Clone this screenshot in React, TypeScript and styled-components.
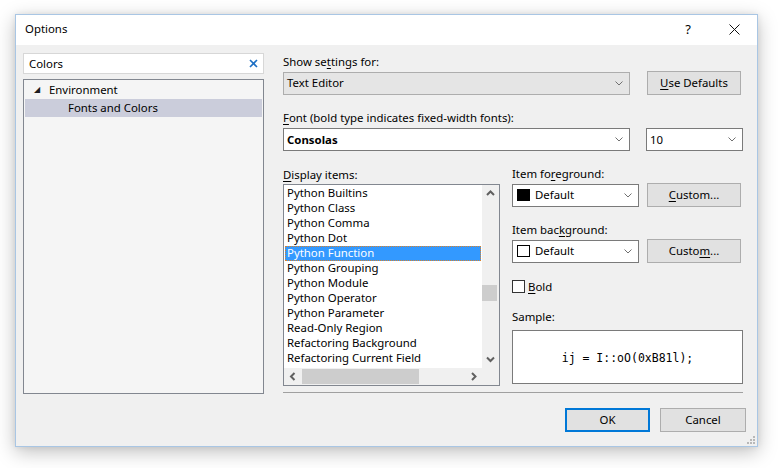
import React from "react";
import styled, { createGlobalStyle } from "styled-components";

const Global = createGlobalStyle`
  html, body { margin: 0; padding: 0; background: #ffffff; }
  body {
    font-family: "Noto Sans", "Open Sans", sans-serif;
    font-size: 11.4px;
    color: #000;
  }
  * { box-sizing: border-box; }
  u { text-decoration: underline; text-underline-offset: 2px; }
`;

const Stage = styled.div`
  width: 778px;
  height: 468px;
  padding: 14px 0 0 15px;
  background: #fff;
`;

const Win = styled.div`
  position: relative;
  width: 743px;
  height: 433px;
  border: 1px solid #a9c6e4;
  background: #f0f0f0;
  box-shadow: 0 5px 18px rgba(0, 0, 0, 0.25), 0 0 6px rgba(0, 0, 0, 0.08);
  display: flex;
  flex-direction: column;
`;

const TitleBar = styled.div`
  height: 30px;
  background: #fff;
  display: flex;
  align-items: center;
  padding-left: 9px;
  padding-bottom: 2px;
`;

const TitleText = styled.div`
  flex: 1;
  line-height: 16px;
`;

const TitleBtn = styled.div`
  width: 46px;
  height: 28px;
  display: flex;
  align-items: center;
  justify-content: center;
  font-size: 13px;
`;

const Body = styled.div`
  flex: 1;
  display: flex;
  gap: 19px;
  padding: 8px 11px 0 7px;
`;

const LeftPane = styled.div`
  width: 241px;
  display: flex;
  flex-direction: column;
`;

const SearchBox = styled.div`
  height: 21px;
  background: #fff;
  border: 1px solid #d7d7d7;
  display: flex;
  align-items: center;
  padding: 0 5px 0 5px;
`;

const SearchText = styled.div`
  flex: 1;
  line-height: 16px;
`;

const Tree = styled.div`
  margin-top: 5px;
  height: 315px;
  border: 1px solid #828790;
  background: #f5f5f5;
  padding: 1px;
`;

const TreeRow = styled.div<{ $indent: number; $selected?: boolean }>`
  height: 18px;
  display: flex;
  align-items: center;
  padding-left: ${(p) => p.$indent}px;
  padding-bottom: 2px;
  background: ${(p) => (p.$selected ? "#cbcddb" : "transparent")};
`;

const Expander = styled.span`
  width: 15px;
  font-size: 8px;
  color: #1e1e1e;
  line-height: 10px;
`;

const RightPane = styled.div`
  flex: 1;
  display: flex;
  flex-direction: column;
`;

const Label = styled.div<{ $mt: number }>`
  margin-top: ${(p) => p.$mt}px;
  height: 16px;
  line-height: 14px;
`;

const Row = styled.div<{ $mt?: number; $gap: number; $h: number }>`
  margin-top: ${(p) => p.$mt ?? 0}px;
  height: ${(p) => p.$h}px;
  display: flex;
  align-items: center;
  gap: ${(p) => p.$gap}px;
`;

const ComboBox = styled.div<{ $w: number; $h: number; $disabled?: boolean }>`
  width: ${(p) => p.$w}px;
  height: ${(p) => p.$h}px;
  background: ${(p) => (p.$disabled ? "#e5e5e5" : "#fff")};
  border: 1px solid ${(p) => (p.$disabled ? "#adadad" : "#7a7a7a")};
  display: flex;
  align-items: center;
  padding: 0 6px 0 3px;
  gap: 5px;
`;

const ComboText = styled.div<{ $bold?: boolean }>`
  flex: 1;
  line-height: 16px;
  font-weight: ${(p) => (p.$bold ? 700 : 400)};
  white-space: nowrap;
`;

const Swatch = styled.span<{ $color: string }>`
  width: 13px;
  height: 12px;
  margin-left: 1px;
  background: ${(p) => p.$color};
  border: 1px solid #000;
`;

const Button = styled.div<{ $w: number; $h: number; $default?: boolean }>`
  width: ${(p) => p.$w}px;
  height: ${(p) => p.$h}px;
  background: #e1e1e1;
  border: ${(p) => (p.$default ? "2px solid #0078d7" : "1px solid #adadad")};
  display: flex;
  align-items: center;
  justify-content: center;
  line-height: 16px;
`;

const DisplaySection = styled.div`
  margin-top: 16px;
  display: flex;
  gap: 12px;
`;

const ListCol = styled.div`
  width: 217px;
  display: flex;
  flex-direction: column;
`;

const SideCol = styled.div`
  width: 231px;
  display: flex;
  flex-direction: column;
`;

const ListBox = styled.div`
  height: 202px;
  border: 1px solid #828790;
  background: #fff;
  display: grid;
  grid-template-columns: 1fr 17px;
  grid-template-rows: 1fr 17px;
`;

const Items = styled.div`
  padding: 1px 1px 0 1px;
  overflow: hidden;
`;

const Item = styled.div<{ $selected?: boolean }>`
  height: 15px;
  line-height: 14px;
  padding-left: 2px;
  white-space: nowrap;
  outline: ${(p) => (p.$selected ? "1px dotted #d9822b" : "none")};
  outline-offset: -1px;
  background: ${(p) => (p.$selected ? "#3399ff" : "transparent")};
  color: ${(p) => (p.$selected ? "#fff" : "#000")};
`;

const VScroll = styled.div`
  background: #f0f0f0;
  display: flex;
  flex-direction: column;
`;

const HScroll = styled.div`
  background: #f0f0f0;
  display: flex;
`;

const Corner = styled.div`
  background: #f0f0f0;
`;

const ArrowBtn = styled.div`
  width: 17px;
  height: 17px;
  flex: none;
  display: flex;
  align-items: center;
  justify-content: center;
`;

const Track = styled.div<{ $vertical?: boolean }>`
  flex: 1;
  display: flex;
  flex-direction: ${(p) => (p.$vertical ? "column" : "row")};
`;

const Thumb = styled.div<{ $vertical?: boolean; $offset: number; $size: number }>`
  background: #cdcdcd;
  ${(p) =>
    p.$vertical
      ? `margin-top: ${p.$offset}px; height: ${p.$size}px; margin-left: 0; width: 15px;`
      : `margin-left: ${p.$offset}px; width: ${p.$size}px; height: 15px; margin-top: 1px;`}
`;

const CheckRow = styled.div`
  margin-top: 17px;
  height: 13px;
  display: flex;
  align-items: center;
  gap: 3px;
`;

const CheckBox = styled.span`
  width: 13px;
  height: 13px;
  border: 1px solid #333;
  background: #fff;
`;

const SampleBox = styled.div`
  margin-top: 4px;
  height: 54px;
  background: #fff;
  border: 1px solid #7a7a7a;
  display: flex;
  align-items: center;
  justify-content: center;
  font-family: "DejaVu Sans Mono", "Liberation Mono", monospace;
  font-size: 11.5px;
  white-space: pre;
  padding-top: 1px;
`;

const Separator = styled.div`
  margin-top: 6px;
  width: 460px;
  height: 1px;
  background: #a0a0a0;
`;

const ButtonRow = styled.div`
  margin-top: 15px;
  display: flex;
  justify-content: flex-end;
  gap: 10px;
`;

const Grip = styled.svg`
  position: absolute;
  right: 2px;
  bottom: 2px;
`;

const Chevron = () => (
  <svg width="8" height="5" viewBox="0 0 8 5">
    <polyline points="0.5,0.5 4,4 7.5,0.5" fill="none" stroke="#707070" strokeWidth="1" />
  </svg>
);

const ScrollArrow = ({ dir }: { dir: "up" | "down" | "left" | "right" }) => {
  const pts = {
    up: "1,5 4.5,1.5 8,5",
    down: "1,1.5 4.5,5 8,1.5",
    left: "5.5,1 2,4.5 5.5,8",
    right: "2,1 5.5,4.5 2,8",
  }[dir];
  const vert = dir === "up" || dir === "down";
  return (
    <svg width={vert ? 9 : 7} height={vert ? 7 : 9} viewBox={vert ? "0 0 9 7" : "0 0 7 9"}>
      <polyline points={pts} fill="none" stroke="#606060" strokeWidth="2" />
    </svg>
  );
};

const items = [
  "Python Builtins",
  "Python Class",
  "Python Comma",
  "Python Dot",
  "Python Function",
  "Python Grouping",
  "Python Module",
  "Python Operator",
  "Python Parameter",
  "Read-Only Region",
  "Refactoring Background",
  "Refactoring Current Field",
];

export default function App() {
  return (
    <>
      <Global />
      <Stage>
        <Win>
          <TitleBar>
            <TitleText>Options</TitleText>
            <TitleBtn>?</TitleBtn>
            <TitleBtn>
              <svg width="11" height="11" viewBox="0 0 11 11">
                <path d="M0.5 0.5 L10.5 10.5 M10.5 0.5 L0.5 10.5" stroke="#111" strokeWidth="1" />
              </svg>
            </TitleBtn>
          </TitleBar>
          <Body>
            <LeftPane>
              <SearchBox>
                <SearchText>Colors</SearchText>
                <svg width="9" height="9" viewBox="0 0 9 9">
                  <path d="M1 1 L8 8 M8 1 L1 8" stroke="#1c6fc4" strokeWidth="1.6" />
                </svg>
              </SearchBox>
              <Tree>
                <TreeRow $indent={9}>
                  <Expander>◢</Expander>
                  <span>Environment</span>
                </TreeRow>
                <TreeRow $indent={43} $selected>
                  Fonts and Colors
                </TreeRow>
              </Tree>
            </LeftPane>
            <RightPane>
              <Label $mt={2}>
                Show se<u>t</u>tings for:
              </Label>
              <Row $gap={17} $h={24}>
                <ComboBox $w={347} $h={23} $disabled>
                  <ComboText>Text Editor</ComboText>
                  <Chevron />
                </ComboBox>
                <Button $w={94} $h={24}>
                  <span>
                    <u>U</u>se Defaults
                  </span>
                </Button>
              </Row>
              <Label $mt={16}>
                <u>F</u>ont (bold type indicates fixed-width fonts):
              </Label>
              <Row $mt={1} $gap={16} $h={23}>
                <ComboBox $w={347} $h={23}>
                  <ComboText $bold>Consolas</ComboText>
                  <Chevron />
                </ComboBox>
                <ComboBox $w={97} $h={23}>
                  <ComboText>10</ComboText>
                  <Chevron />
                </ComboBox>
              </Row>
              <DisplaySection>
                <ListCol>
                  <Label $mt={1}>
                    <u>D</u>isplay items:
                  </Label>
                  <ListBox>
                    <Items>
                      {items.map((t, i) => (
                        <Item key={t} $selected={i === 4}>
                          {t}
                        </Item>
                      ))}
                    </Items>
                    <VScroll>
                      <ArrowBtn>
                        <ScrollArrow dir="up" />
                      </ArrowBtn>
                      <Track $vertical>
                        <Thumb $vertical $offset={83} $size={16} />
                      </Track>
                      <ArrowBtn>
                        <ScrollArrow dir="down" />
                      </ArrowBtn>
                    </VScroll>
                    <HScroll>
                      <ArrowBtn>
                        <ScrollArrow dir="left" />
                      </ArrowBtn>
                      <Track>
                        <Thumb $offset={1} $size={117} />
                      </Track>
                      <ArrowBtn>
                        <ScrollArrow dir="right" />
                      </ArrowBtn>
                    </HScroll>
                    <Corner />
                  </ListBox>
                </ListCol>
                <SideCol>
                  <Label $mt={0}>
                    Item fo<u>r</u>eground:
                  </Label>
                  <Row $gap={8} $h={24}>
                    <ComboBox $w={127} $h={23}>
                      <Swatch $color="#000" />
                      <ComboText>Default</ComboText>
                      <Chevron />
                    </ComboBox>
                    <Button $w={94} $h={24}>
                      <span>
                        <u>C</u>ustom...
                      </span>
                    </Button>
                  </Row>
                  <Label $mt={16}>
                    Item bac<u>k</u>ground:
                  </Label>
                  <Row $gap={8} $h={24}>
                    <ComboBox $w={127} $h={23}>
                      <Swatch $color="#fff" />
                      <ComboText>Default</ComboText>
                      <Chevron />
                    </ComboBox>
                    <Button $w={94} $h={24}>
                      <span>
                        Custo<u>m</u>...
                      </span>
                    </Button>
                  </Row>
                  <CheckRow>
                    <CheckBox />
                    <span>
                      <u>B</u>old
                    </span>
                  </CheckRow>
                  <Label $mt={17}>Sample:</Label>
                  <SampleBox>ij = I::oO(0xB81l);</SampleBox>
                </SideCol>
              </DisplaySection>
              <Separator />
              <ButtonRow>
                <Button $w={85} $h={24} $default>
                  OK
                </Button>
                <Button $w={86} $h={24}>
                  Cancel
                </Button>
              </ButtonRow>
            </RightPane>
          </Body>
          <Grip width="10" height="10" viewBox="0 0 10 10">
            {[
              [8, 0],
              [8, 3],
              [5, 3],
              [8, 6],
              [5, 6],
              [2, 6],
            ].map(([x, y]) => (
              <rect key={`${x}-${y}`} x={x} y={y + 2} width="2" height="2" fill="#b8b8b8" />
            ))}
          </Grip>
        </Win>
      </Stage>
    </>
  );
}
